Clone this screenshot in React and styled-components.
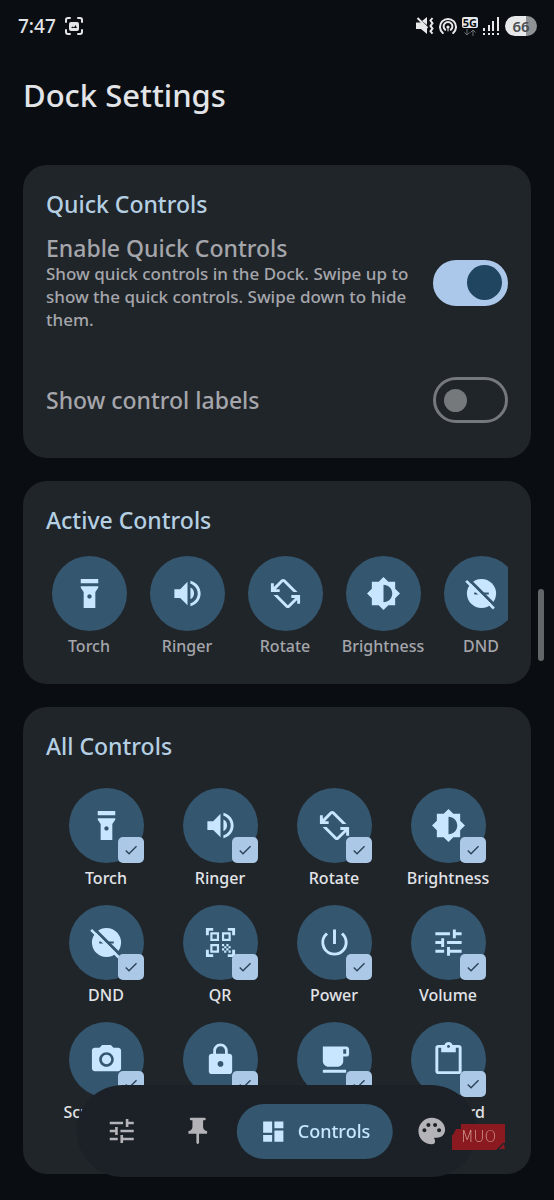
import { useState } from 'react'
import styled, { createGlobalStyle, css } from 'styled-components'
import {
  MdBrightness6,
  MdCheck,
  MdContentPaste,
  MdDashboard,
  MdFlashlightOn,
  MdLocalCafe,
  MdLock,
  MdPalette,
  MdPhotoCamera,
  MdPowerSettingsNew,
  MdPushPin,
  MdQrCodeScanner,
  MdScreenRotationAlt,
  MdTune,
  MdVolumeUp,
} from 'react-icons/md'

const GlobalStyle = createGlobalStyle`
  * {
    box-sizing: border-box;
  }

  html {
    scrollbar-width: none;
    background: #0a0e12;
  }

  body {
    margin: 0;
    color: #e2e4e8;
    font-family: 'Noto Sans', 'Open Sans', sans-serif;
    font-weight: 500;
  }

  button, input {
    font: inherit;
  }
`

const Page = styled.div`
  padding: 0 23px 26px;
`

const StatusBar = styled.div`
  display: flex;
  align-items: center;
  justify-content: space-between;
  height: 52px;
  margin: 0 -6px 0 -5px;
`

const StatusGroup = styled.div`
  display: flex;
  align-items: center;
  gap: ${ props => props.$gap };
`

const Time = styled.span`
  font-size: 19px;
  line-height: 24px;
`

const Network = styled.div`
  display: flex;
  flex-direction: column;
  align-items: center;
  gap: 1px;
`

const NetworkTag = styled.span`
  padding: 0 1px;
  border-radius: 2px;
  background: #e6e8ea;
  color: #0a0e12;
  font-size: 11px;
  font-weight: 700;
  line-height: 11px;
`

const Battery = styled.span`
  width: 32px;
  border-radius: 10px;
  background: linear-gradient(90deg, #e6e8ea 66%, #8f9294 66%);
  color: #4b4e51;
  font-size: 15px;
  font-weight: 600;
  line-height: 20px;
  text-align: center;
`

const PageTitle = styled.h1`
  margin: 21px 0 48px;
  font-size: 31px;
  font-weight: 500;
  line-height: 44px;
`

const Cards = styled.main`
  display: flex;
  flex-direction: column;
  gap: 23px;
`

const Card = styled.section`
  padding: 23px;
  border-radius: 24px;
  background: #20252a;
`

const CardTitle = styled.h2`
  margin: 0;
  color: #b5cfe2;
  font-size: 23px;
  font-weight: 500;
  line-height: 32px;
`

const Setting = styled.label`
  display: flex;
  align-items: center;
  gap: 12px;
  min-height: 70px;
  margin-top: ${ props => props.$space };
`

const SettingText = styled.span`
  flex: 1;
  color: #a5a6ab;
`

const SettingName = styled.span`
  display: block;
  font-size: 23px;
  line-height: 28px;
`

const SettingHint = styled.span`
  display: block;
  font-size: 17px;
  line-height: 23px;
`

const Switch = styled.input`
  display: flex;
  flex: none;
  align-items: center;
  width: 75px;
  height: 46px;
  margin: 0;
  padding: 0 8px;
  border: 3px solid #76797c;
  border-radius: 23px;
  appearance: none;
  cursor: pointer;

  &::before {
    content: '';
    width: 23px;
    height: 23px;
    border-radius: 50%;
    background: #76797c;
  }

  &:checked {
    justify-content: flex-end;
    padding: 0 3px;
    border-color: #abc8ea;
    background: #abc8ea;
  }

  &:checked::before {
    width: 35px;
    height: 35px;
    background: #204561;
  }
`

const ActiveRow = styled.div`
  display: flex;
  gap: 12px;
  margin-top: 20px;
  padding-bottom: 3px;
  overflow-x: auto;
  scrollbar-width: none;
`

const ControlGrid = styled.div`
  display: grid;
  grid-template-columns: repeat(4, 1fr);
  gap: 15px 0;
  padding: 26px 3px 27px;
`

const controlStyles = css`
  display: flex;
  flex-direction: column;
  align-items: center;
  gap: 4px;
  font-size: 16px;
  line-height: 23px;
  cursor: pointer;
`

const ActiveControl = styled.button`
  ${ controlStyles }
  flex: none;
  width: 86px;
  padding: 0;
  border: 0;
  background: none;
  color: #a5a6ab;
`

const GridControl = styled.label`
  ${ controlStyles }
  color: #e2e4e8;
`

const Circle = styled.span`
  position: relative;
  display: flex;
  align-items: center;
  justify-content: center;
  width: 75px;
  height: 75px;
  border-radius: 50%;
  background: #34566f;
  color: #c8e6ff;
  font-size: 35px;
`

// tick box in the corner of the circle
const Badge = styled.span`
  position: absolute;
  right: 0;
  bottom: 0;
  display: grid;
  width: 26px;
  height: 26px;
  color: #2b4257;
  font-size: 16px;

  > * {
    grid-area: 1 / 1;
    place-self: center;
  }

  svg {
    pointer-events: none;
  }

  input:not(:checked) + svg {
    visibility: hidden;
  }
`

const Tick = styled.input`
  width: 26px;
  height: 26px;
  margin: 0;
  border-radius: 5px;
  background: #abc8e6;
  appearance: none;
`

const BottomNav = styled.nav`
  position: fixed;
  bottom: 23px;
  left: 50%;
  display: flex;
  align-items: center;
  gap: 2px;
  height: 92px;
  padding: 0 8px;
  border-radius: 46px;
  background: #1c2127;
  transform: translateX(-50%);
`

const NavButton = styled.button`
  display: flex;
  align-items: center;
  justify-content: center;
  gap: 11px;
  height: 55px;
  padding: 0 ${ props => props.$active ? '23px' : '21px' };
  border: 0;
  border-radius: 28px;
  background: ${ props => props.$active ? '#34566f' : 'none' };
  color: ${ props => props.$active ? '#c8e6ff' : '#b3b3b8' };
  font-size: 18px;
  cursor: pointer;

  svg {
    flex: none;
    font-size: ${ props => props.$active ? '27px' : '32px' };
  }
`

const ScrollThumb = styled.div`
  position: fixed;
  top: 589px;
  right: 10px;
  width: 6px;
  height: 72px;
  border-radius: 3px;
  background: #636669;
`

const Watermark = styled.div`
  position: fixed;
  right: 49px;
  bottom: 50px;
  display: grid;
  color: #d09a90;
  font-family: 'DejaVu Sans', sans-serif;
  font-size: 15px;
  font-weight: 200;
  line-height: 26px;
  text-align: center;

  > * {
    grid-area: 1 / 1;
  }
`

function DndIcon() {
  return (
    <svg width="35" height="35" viewBox="0 0 24 24" fill="none">
      <circle cx="12" cy="12" r="10" fill="#c8e6ff" />
      <path d="M7 12h3.500M13 12h4" stroke="#34566f" strokeWidth="1.400" />
      <path d="M2.500 1.500l20 20" stroke="#34566f" strokeWidth="2" />
      <path d="M1.500 3.300l19 19" stroke="#c8e6ff" strokeWidth="1.800" />
    </svg>
  )
}

const controls = [
  { name: 'Torch', Icon: MdFlashlightOn },
  { name: 'Ringer', Icon: MdVolumeUp },
  { name: 'Rotate', Icon: MdScreenRotationAlt },
  { name: 'Brightness', Icon: MdBrightness6 },
  { name: 'DND', Icon: DndIcon },
  { name: 'QR', Icon: MdQrCodeScanner },
  { name: 'Power', Icon: MdPowerSettingsNew },
  { name: 'Volume', Icon: MdTune },
  { name: 'Screenshot', Icon: MdPhotoCamera },
  { name: 'Lock', Icon: MdLock },
  { name: 'Caffeine', Icon: MdLocalCafe },
  { name: 'Clipboard', Icon: MdContentPaste },
]

const tabs = [
  { id: 'general', label: 'General', Icon: MdTune },
  { id: 'pinned', label: 'Pinned', Icon: MdPushPin },
  { id: 'controls', label: 'Controls', Icon: MdDashboard },
  { id: 'theme', label: 'Theme', Icon: MdPalette },
]

function ScreenshotIcon() {
  return (
    <svg width="18" height="18" viewBox="0 0 18 18" fill="none">
      <path d="M1 5V3a2 2 0 0 1 2-2h2M13 1h2a2 2 0 0 1 2 2v2M17 13v2a2 2 0 0 1-2 2h-2M5 17H3a2 2 0 0 1-2-2v-2" stroke="#e2e4e8" strokeWidth="2" strokeLinecap="round" />
      <rect x="4" y="5" width="10" height="9" rx="2" fill="#e2e4e8" />
      <path d="M6 11l1.500-1.500 1.500 1 1.500-2.500 1.500 3z" fill="#0a0e12" />
    </svg>
  )
}

function MuteIcon() {
  return (
    <svg width="18" height="18" viewBox="0 0 18 18" fill="none">
      <path d="M6 4l5-4v8z" fill="#e6e8ea" />
      <path d="M0 5.500h5l6 5.500v6l-6-5H0z" fill="#e6e8ea" />
      <path d="M1.500 1l10 10" stroke="#e6e8ea" strokeWidth="2" />
      <path d="M16.500 1l-2 2.500 2 2.700-2 2.700 2 2.700-2 2.700 2 2.400" stroke="#e6e8ea" strokeWidth="2" />
    </svg>
  )
}

function HotspotIcon() {
  return (
    <svg width="18" height="18" viewBox="0 0 18 18" fill="none" stroke="#e6e8ea" strokeWidth="2" strokeLinecap="round">
      <path d="M3.800 16a8 8 0 1 1 10.400 0M6.200 12.800a4.400 4.400 0 1 1 5.600 0" />
      <circle cx="9" cy="10" r="1.600" fill="#e6e8ea" stroke="none" />
      <path d="M9 11v3" strokeWidth="1" />
    </svg>
  )
}

function DataArrows() {
  return (
    <svg width="12" height="7" viewBox="0 0 12 7" fill="none" stroke="#6b6e71">
      <path d="M3 0v6M.5 3.500L3 6l2.500-2.500M9 7V1M6.500 3.500L9 1l2.500 2.500" />
    </svg>
  )
}

function SignalIcon() {
  return (
    <svg width="17" height="18" viewBox="0 0 17 18" fill="#e6e8ea">
      <path d="M0 11h2v3H0zM5 8h2v6H5zM9 4h2v10H9zM14 0h2v14h-2zM0 16h2v2H0zM5 16h2v2H5zM9 16h2v2H9zM14 16h2v2h-2z" />
    </svg>
  )
}

function WatermarkShape() {
  return (
    <svg width="53" height="26" viewBox="0 0 53 26" fill="#8a1a1f">
      <path d="M9 0h44v19h-2l-7 7H0V11h1l3-6h5z" />
      <path d="M47 25l5-5 1 5z" />
    </svg>
  )
}

function App() {
  const [activeTab, setActiveTab] = useState('controls')

  return (
    <>
      <GlobalStyle />
      <Page>
        <StatusBar>
          <StatusGroup $gap="9px">
            <Time>7:47</Time>
            <ScreenshotIcon />
          </StatusGroup>
          <StatusGroup $gap="5px">
            <MuteIcon />
            <HotspotIcon />
            <Network>
              <NetworkTag>5G</NetworkTag>
              <DataArrows />
            </Network>
            <SignalIcon />
            <Battery>66</Battery>
          </StatusGroup>
        </StatusBar>

        <PageTitle>Dock Settings</PageTitle>

        <Cards>
          <Card>
            <CardTitle>Quick Controls</CardTitle>
            <Setting $space="14px">
              <SettingText>
                <SettingName>Enable Quick Controls</SettingName>
                <SettingHint>
                  Show quick controls in the Dock. Swipe up to show the quick controls. Swipe down to hide them.
                </SettingHint>
              </SettingText>
              <Switch type="checkbox" role="switch" defaultChecked />
            </Setting>
            <Setting $space="34px">
              <SettingText>
                <SettingName>Show control labels</SettingName>
              </SettingText>
              <Switch type="checkbox" role="switch" />
            </Setting>
          </Card>

          <Card>
            <CardTitle>Active Controls</CardTitle>
            <ActiveRow>
              { controls.slice(0, 5).map(({ name, Icon }) => (
                <ActiveControl key={ name } type="button">
                  <Circle><Icon /></Circle>
                  { name }
                </ActiveControl>
              )) }
            </ActiveRow>
          </Card>

          <Card>
            <CardTitle>All Controls</CardTitle>
            <ControlGrid>
              { controls.map(({ name, Icon }) => (
                <GridControl key={ name }>
                  <Circle>
                    <Icon />
                    <Badge>
                      <Tick type="checkbox" defaultChecked />
                      <MdCheck />
                    </Badge>
                  </Circle>
                  { name }
                </GridControl>
              )) }
            </ControlGrid>
          </Card>
        </Cards>
      </Page>

      <BottomNav>
        { tabs.map(({ id, label, Icon }) => (
          <NavButton
            key={ id }
            type="button"
            aria-label={ label }
            $active={ id === activeTab }
            onClick={ () => setActiveTab(id) }
          >
            <Icon />
            { id === activeTab && label }
          </NavButton>
        )) }
      </BottomNav>

      <ScrollThumb />
      <Watermark>
        <WatermarkShape />
        <span>MUO</span>
      </Watermark>
    </>
  )
}

export default App
